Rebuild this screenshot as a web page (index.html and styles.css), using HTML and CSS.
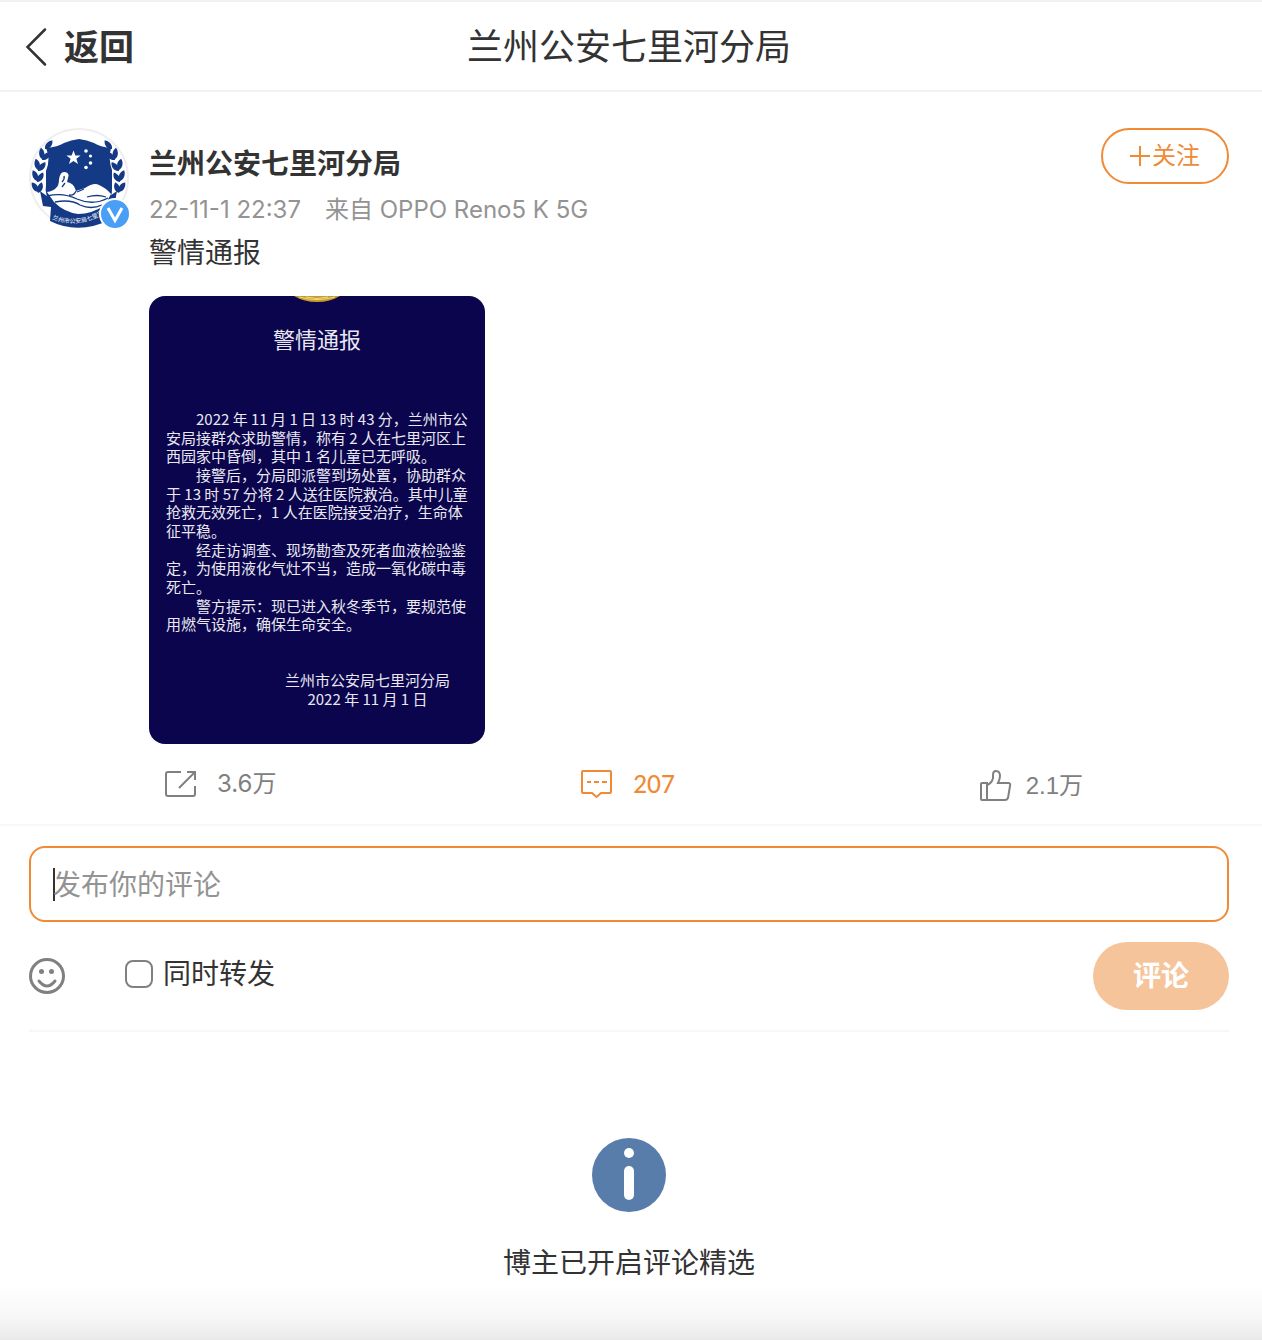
FILE: index.html
```html
<!DOCTYPE html>
<html lang="zh-CN">
<head>
<meta charset="utf-8">
<meta name="viewport" content="width=device-width, initial-scale=1">
<title>兰州公安七里河分局</title>
<link rel="stylesheet" href="styles.css">
</head>
<body>
<header class="topbar">
  <a class="back" href="#">
    <svg class="back-icon" viewBox="0 0 24 40" aria-hidden="true"><path d="M20 2.500 2.500 20 20 37.500"/></svg>
    <span>返回</span>
  </a>
  <h1 class="title">兰州公安七里河分局</h1>
</header>

<main class="main">
  <article class="post">
    <div class="avatar">
      <svg viewBox="0 0 100 100" role="img" aria-label="兰州公安七里河分局">
        <defs>
          <path id="leaf" d="M0 0C-4-2-5-7-3-11 1.500-9 3-4 0 0Z"/>
          <g id="laurel">
            <use href="#leaf" transform="translate(16 21) rotate(55)"/>
            <use href="#leaf" transform="translate(13 31) rotate(10)"/>
            <use href="#leaf" transform="translate(13 32) rotate(60)"/>
            <use href="#leaf" transform="translate(9 42) rotate(4)"/>
            <use href="#leaf" transform="translate(9 43) rotate(56)"/>
            <use href="#leaf" transform="translate(8 53) rotate(-6)"/>
            <use href="#leaf" transform="translate(8 54) rotate(48)"/>
            <use href="#leaf" transform="translate(9 64) rotate(-18)"/>
            <use href="#leaf" transform="translate(9 65) rotate(34)"/>
          </g>
          <path id="ribbon" d="M23 91Q56 105 90 74"/>
        </defs>
        <circle cx="50" cy="50" r="49" fill="#fff" stroke="#eee" stroke-width="2"/>
        <g fill="#143a86">
          <use href="#laurel"/>
          <use href="#laurel" transform="matrix(-1 0 0 1 99 0)"/>
          <path d="M17 20Q29 19 35 15 42 12 50 11 58 12 65 15 71 19 82 20 79 31 83 42V60Q84 70 74 79 62 87 49 89 33 86 23 75 15 68 17 57V43Q22 31 17 20Z"/>
          <path d="M11 63 26 74Q49 91 72 74L88 63 86 74 92 76 81 92Q49 107 21 93L22 79 14 78Z"/>
        </g>
        <g fill="#fff">
          <path d="m44.500 22.500 1.900 5h5.200l-4.200 3.300 1.600 5.200-4.500-3.100-4.500 3.100 1.600-5.200-4.200-3.300h5.200z"/>
          <circle cx="57" cy="23" r="1.800"/><circle cx="61.500" cy="28" r="1.600"/><circle cx="61.500" cy="35" r="1.800"/><circle cx="57" cy="39.500" r="1.800"/>
          <path d="M18 64Q30 62 30 52 31 43 36 44 41 45 39 50L38 54Q45 55 47 63L56 60Q65 54 70 57 77 60 82 66L76 77Q63 86 49 86 35 84 25 74Z"/>
        </g>
        <g fill="none" stroke="#143a86" stroke-width="1.300">
          <path d="M35 48Q36 51 33 54M36 55 33 59M47 63Q45 68 40 67M48 64 55 61M18 68Q34 64 48 71 64 78 79 70M26 74Q42 71 51 77 62 82 73 77M58 69Q68 66 77 69"/>
        </g>
        <path d="M24 85Q49 97 78 80" fill="none" stroke="#143a86" stroke-width="4"/>
        <text class="emblem-text"><textPath href="#ribbon">兰州市公安局七里河分局</textPath></text>
      </svg>
      <svg class="verified" viewBox="0 0 32 32" role="img" aria-label="认证">
        <circle cx="16" cy="16" r="15" fill="#489ff5" stroke="#fff" stroke-width="2"/>
        <path d="m9 10 7 12.500 7-12.500" fill="none" stroke="#fff" stroke-width="3"/>
      </svg>
    </div>

    <div class="content">
      <div class="author-row">
        <div>
          <h2 class="author">兰州公安七里河分局</h2>
          <p class="meta"><time datetime="2022-11-01T22:37">22-11-1 22:37</time><span>来自 OPPO Reno5 K 5G</span></p>
        </div>
        <button class="follow" type="button">
          <svg viewBox="0 0 20 20" aria-hidden="true"><path d="M0 10h20M10 0v20"/></svg>关注
        </button>
      </div>
      <p class="text">警情通报</p>

      <section class="notice">
        <svg class="seal" viewBox="0 0 46 6" aria-hidden="true">
          <path d="M0 0h46Q36 6 23 6T0 0Z" fill="#c49a35"/>
          <path d="M5 1q18 5 36 0M12 1q11 3 22 0" fill="none" stroke="#f2dc72"/>
        </svg>
        <h3 class="notice-title">警情通报</h3>
        <div class="notice-body">
          <span class="indent">2022 年 11 月 1 日 13 时 43 分，兰州市公</span>
          <span>安局接群众求助警情，称有 2 人在七里河区上</span>
          <span>西园家中昏倒，其中 1 名儿童已无呼吸。</span>
          <span class="indent">接警后，分局即派警到场处置，协助群众</span>
          <span>于 13 时 57 分将 2 人送往医院救治。其中儿童</span>
          <span>抢救无效死亡，1 人在医院接受治疗，生命体</span>
          <span>征平稳。</span>
          <span class="indent">经走访调查、现场勘查及死者血液检验鉴</span>
          <span>定，为使用液化气灶不当，造成一氧化碳中毒</span>
          <span>死亡。</span>
          <span class="indent">警方提示：现已进入秋冬季节，要规范使</span>
          <span>用燃气设施，确保生命安全。</span>
        </div>
        <div class="signature">
          <span>兰州市公安局七里河分局</span>
          <span>2022 年 11 月 1 日</span>
        </div>
      </section>
    </div>
  </article>

  <div class="actions">
    <button class="action" type="button" aria-label="转发 3.6万">
      <svg viewBox="0 0 32 32"><path d="M16 4H3Q1 4 1 6V26Q1 28 3 28H28Q30 28 30 26V18M14 20 30 4M22 4H30V12"/></svg>
      <span>3.6万</span>
    </button>
    <button class="action action-active" type="button" aria-label="评论 207">
      <svg viewBox="0 0 32 32"><path d="M2 3H29Q30 3 30 4V24Q30 25 29 25H20L15.500 29 11 25H2Q1 25 1 24V4Q1 3 2 3ZM6 14H10M13 14H18M21 14H26"/></svg>
      <span>207</span>
    </button>
    <button class="action action-like" type="button" aria-label="赞 2.1万">
      <svg viewBox="0 0 32 32"><path d="M2 13H7V30H2Q1 30 1 29V14Q1 13 2 13ZM7 15Q12 13 13 8V5Q13 1 16 1 20 1 20 6 20 9 18 13H28Q31 13 30 16L28 28Q27 30 25 30H7"/></svg>
      <span>2.1万</span>
    </button>
  </div>

  <form class="composer">
    <input class="comment-input" type="text" placeholder="发布你的评论" aria-label="发布你的评论">
    <div class="composer-row">
      <button class="emoji" type="button" aria-label="表情">
        <svg viewBox="0 0 36 36"><circle cx="18" cy="18" r="16.500"/><path d="M10 23Q18 33 26 23"/><g class="eyes"><circle cx="12.500" cy="13.500" r="2.500"/><circle cx="22.500" cy="13.500" r="2.500"/></g></svg>
      </button>
      <label class="repost"><input type="checkbox">同时转发</label>
      <button class="submit" type="submit">评论</button>
    </div>
  </form>

  <section class="empty">
    <svg viewBox="0 0 74 74" aria-hidden="true"><circle cx="37" cy="37" r="37" fill="#597dab"/><circle cx="37" cy="15" r="5" fill="#fff"/><rect x="32" y="28" width="10" height="34" rx="5" fill="#fff"/></svg>
    <p>博主已开启评论精选</p>
  </section>
</main>
<div class="fade"></div>
</body>
</html>
```
FILE: styles.css
```css
* { box-sizing: border-box; }

body {
  margin: 0;
  min-height: 100vh;
  display: flex;
  flex-direction: column;
  background: #fff;
  color: #333;
  font-family: Inter, "Noto Sans CJK SC", sans-serif;
  font-size: 28px;
  line-height: 40px;
}

h1, h2, h3, p { margin: 0; font-size: inherit; font-weight: 400; }
button { padding: 0; border: 0; background: none; color: inherit; font: inherit; cursor: pointer; }
svg { display: block; }

.topbar {
  display: grid;
  grid-template-columns: 1fr auto 1fr;
  align-items: center;
  height: 92px;
  padding: 2px 29px 0 25px;
  border: solid #f1f1f1;
  border-width: 2px 0;
}
.back { display: flex; align-items: center; gap: 15px; color: inherit; font-size: 35px; font-weight: 700; text-decoration: none; }
.back-icon { width: 24px; height: 40px; fill: none; stroke: #333; stroke-width: 2.5; stroke-linecap: round; }
.topbar .title { font-size: 36px; }

.post { display: flex; gap: 20px; padding: 36px 33px 0 29px; }
.avatar { position: relative; flex: none; width: 100px; height: 100px; }
.verified { position: absolute; right: -2px; bottom: -2px; width: 32px; height: 32px; }
.emblem-text { fill: #fff; font-size: 6px; }

.content { flex: 1; min-width: 0; }
.author-row { display: flex; justify-content: space-between; align-items: flex-start; }
.author { padding-top: 16px; font-weight: 700; }
.meta { display: flex; gap: 24px; padding-top: 6px; color: #939393; font-size: 24px; }
.follow {
  display: flex;
  align-items: center;
  justify-content: center;
  gap: 2px;
  width: 128px;
  height: 56px;
  border: 2px solid #f08a35;
  border-radius: 28px;
  color: #f08a35;
  font-size: 24px;
}
.follow svg { width: 20px; height: 20px; fill: none; stroke: currentColor; stroke-width: 2; }
.text { padding-top: 3px; }

.notice {
  width: 336px;
  height: 448px;
  margin-top: 23px;
  padding: 0 17px;
  border-radius: 16px;
  background: #0a054c;
  color: #e9e8f2;
  font-family: "Noto Sans CJK SC", sans-serif;
  font-size: 15px;
  line-height: 18px;
  white-space: nowrap;
}
.seal { width: 46px; height: 6px; margin: 0 auto; }
.notice-title { padding: 20px 0 0; font-size: 22px; line-height: 32px; text-align: center; }
.notice-body { display: grid; grid-auto-rows: 1fr; height: 224px; margin-top: 56px; }
.indent { padding-left: 30px; }
.signature { display: grid; width: 165px; margin: 37px 18px 0 auto; gap: 1px; text-align: center; }

.actions {
  display: flex;
  justify-content: space-between;
  height: 82px;
  padding: 20px 179px 0 165px;
  border-bottom: 2px solid #f7f7f7;
}
.action { display: flex; align-items: center; gap: 20px; height: 40px; color: #808080; font-size: 24px; }
.action svg { width: 32px; height: 32px; fill: none; stroke: currentColor; stroke-width: 2; }
.action-active { color: #f08a35; font-family: Lato, sans-serif; font-weight: 500; }
.action-like { gap: 14px; height: 44px; font-family: "Liberation Sans", "Noto Sans CJK SC", sans-serif; }

.composer { margin: 20px 33px 0 29px; padding-bottom: 20px; border-bottom: 2px solid #f7f7f7; }
.comment-input {
  display: block;
  width: 100%;
  height: 76px;
  padding: 2px 22px 0;
  border: 2px solid #f08a35;
  border-radius: 16px;
  outline: none;
  background: #fff;
  color: #333;
  font: inherit;
}
.comment-input::placeholder { color: #939393; opacity: 1; }
/* resting cursor bar while the box is empty */
.comment-input:placeholder-shown { background: linear-gradient(#333, #333) 22px 20px / 2px 33px no-repeat #fff; }
.composer-row { display: flex; align-items: center; height: 68px; margin-top: 20px; }
.emoji svg { width: 36px; height: 36px; fill: none; stroke: #808080; stroke-width: 3; stroke-linecap: round; }
.emoji .eyes { fill: #808080; stroke: none; }
.repost { display: flex; align-items: center; gap: 10px; margin-left: 60px; padding-bottom: 4px; }
.repost input { appearance: none; width: 28px; height: 28px; margin: 0; border: 2px solid #808080; border-radius: 8px; background: #fff; }
.repost input:checked { background: #f08a35; }
.submit { width: 136px; height: 68px; margin-left: auto; border-radius: 34px; background: #f6c49b; color: #fff; font-weight: 700; }

.empty { display: flex; flex-direction: column; align-items: center; gap: 31px; padding: 106px 33px 0 29px; }
.empty svg { width: 74px; height: 74px; }
.fade { flex: none; height: 56px; margin-top: auto; background: linear-gradient(#fff, #f7f7f7 60%, #e9e9e9); }
```
